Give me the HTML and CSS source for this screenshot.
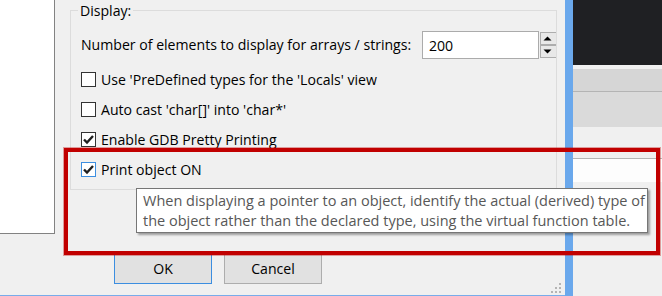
FILE: index.html
```html
<!DOCTYPE html>
<html lang="en">
  <head>
    <meta charset="UTF-8" />
    <title>Debugger Settings</title>
    <link rel="stylesheet" href="styles.css">
  </head>
  <body>
    <div class="screen">
      <div class="dialog">
        <div class="dialog-body">
          <div class="list"></div>

          <fieldset class="group">
            <legend>Display:</legend>

            <div class="number-row">
              <label class="number-label" for="elements">Number of elements to display for arrays / strings:</label>
              <input type="text" id="elements" value="200" />
              <div class="spin">
                <span class="spin-btn">
                  <svg width="9" height="5" viewBox="0 0 9 5"><path d="M0.5 4.5 L4.5 0.5 L8.5 4.5 Z" fill="#000" /></svg>
                </span>
                <span class="spin-btn">
                  <svg width="9" height="5" viewBox="0 0 9 5"><path d="M0.5 0.5 L4.5 4.5 L8.5 0.5 Z" fill="#000" /></svg>
                </span>
              </div>
            </div>

            <label class="check">
              <span class="box"></span>
              Use 'PreDefined types for the 'Locals' view
            </label>
            <label class="check">
              <span class="box"></span>
              Auto cast 'char[]' into 'char*'
            </label>
            <label class="check">
              <span class="box">
                <svg width="13" height="13" viewBox="0 0 13 13"><path d="M2 6.5 L5 9.5 L11 3" fill="none" stroke="#1e1e1e" stroke-width="2.4" /></svg>
              </span>
              Enable GDB Pretty Printing
            </label>
            <label class="check">
              <span class="box focused">
                <svg width="13" height="13" viewBox="0 0 13 13"><path d="M2 6.5 L5 9.5 L11 3" fill="none" stroke="#1e1e1e" stroke-width="2.4" /></svg>
              </span>
              Print object ON
            </label>
          </fieldset>
        </div>

        <div class="buttons">
          <button class="default">OK</button>
          <button>Cancel</button>
        </div>

        <svg class="grip" width="11" height="11" viewBox="0 0 11 11">
          <rect x="8" y="0" width="2" height="2" fill="#b4b4b4" />
          <rect x="4" y="4" width="2" height="2" fill="#b4b4b4" />
          <rect x="8" y="4" width="2" height="2" fill="#b4b4b4" />
          <rect x="0" y="8" width="2" height="2" fill="#b4b4b4" />
          <rect x="4" y="8" width="2" height="2" fill="#b4b4b4" />
          <rect x="8" y="8" width="2" height="2" fill="#b4b4b4" />
        </svg>
      </div>

      <div class="frame"></div>

      <div class="backdrop">
        <div class="editor"></div>
        <div class="gap"></div>
        <div class="tabs"></div>
        <div class="toolbar"></div>
        <div class="spacer"></div>
        <div class="field"></div>
      </div>

      <div class="tooltip">
        When displaying a pointer to an object, identify the actual (derived) type of<br />
        the object rather than the declared type, using the virtual function table.
      </div>

      <div class="highlight"></div>
    </div>
  </body>
</html>
```

FILE: styles.css
```css
* {
  margin: 0;
  padding: 0;
  box-sizing: border-box;
}

body {
  width: 662px;
  height: 296px;
  overflow: hidden;
  font-family: "Open Sans", "Noto Sans", sans-serif;
  font-size: 14.1px;
  color: #000;
  background: #f0f0f0;
}

.screen {
  position: relative;
  display: flex;
  height: 296px;
}

.dialog {
  position: relative;
  flex: none;
  width: 565px;
  height: 296px;
  background: #f0f0f0;
  border-bottom: 1px solid #78acea;
}

.dialog-body {
  display: flex;
  align-items: flex-start;
  height: 234px;
}

.list {
  width: 55px;
  height: 234px;
  background: #fff;
  border-right: 1px solid #828282;
  border-bottom: 1px solid #828282;
}

.group {
  margin-left: 15px;
  width: 480px;
  height: 190px;
  padding: 0 0 0 10px;
  border: 1px solid #dcdcdc;
}

.group legend {
  margin-left: -3px;
  padding: 0 2px;
  line-height: 21px;
}

.number-row {
  display: flex;
  align-items: flex-start;
  margin-top: 10px;
  height: 28px;
}

.number-label {
  width: 341px;
  line-height: 27px;
  white-space: nowrap;
}

.number-row input {
  width: 117px;
  height: 28px;
  padding-left: 6px;
  border: 1px solid #ababab;
  background: #fff;
  font: inherit;
  color: #000;
  outline: none;
}

.spin {
  display: flex;
  flex-direction: column;
  margin: 1px 0 0 1px;
  width: 16px;
}

.spin-btn {
  display: flex;
  align-items: center;
  justify-content: center;
  height: 13px;
  padding-right: 2px;
  background: #e8e8e8;
  border: 1px solid #adadad;
  border-right: none;
}

.check {
  display: flex;
  align-items: center;
  gap: 5px;
  height: 30px;
  white-space: nowrap;
}

.check:first-of-type {
  margin-top: 5px;
}

.box {
  display: flex;
  align-items: center;
  justify-content: center;
  flex: none;
  width: 15px;
  height: 15px;
  background: #fff;
  border: 1px solid #333;
}

.box.focused {
  border-color: #3c8ee0;
}

.buttons {
  display: flex;
  gap: 12px;
  margin-top: 19px;
  padding-left: 114px;
}

.buttons button {
  width: 98px;
  height: 31px;
  background: #e1e1e1;
  border: 1px solid #adadad;
  font: inherit;
  color: #000;
}

.buttons button.default {
  border-color: #3c8ee0;
}

.grip {
  position: absolute;
  right: 3px;
  bottom: 1px;
}

.frame {
  flex: none;
  width: 8px;
  background: #6aa8ec;
}

.backdrop {
  flex: 1;
  display: flex;
  flex-direction: column;
}

.editor {
  height: 65px;
  background: #1f2023;
}

.gap {
  height: 4px;
}

.tabs {
  height: 23px;
  background: #d6d6d6;
  border-bottom: 1px solid #b4b4b4;
}

.toolbar {
  height: 35px;
  background: #dadada;
}

.spacer {
  height: 31px;
}

.field {
  height: 24px;
  background: #fdfdfd;
  border-top: 1px solid #b4b4b4;
}

.tooltip {
  position: absolute;
  left: 136px;
  top: 188px;
  width: 512px;
  height: 45px;
  padding: 2px 0 0 6px;
  background: #fff;
  border: 1px solid #767676;
  box-shadow: 2px 2px 2px rgba(0, 0, 0, 0.35);
  color: #575757;
  font-size: 14.5px;
  line-height: 20px;
  white-space: nowrap;
}

.highlight {
  position: absolute;
  left: 64px;
  top: 148px;
  width: 596px;
  height: 107px;
  border: 4px solid #c10000;
  box-shadow: 0 0 0 1px rgba(193, 0, 0, 0.35);
  pointer-events: none;
}
```
